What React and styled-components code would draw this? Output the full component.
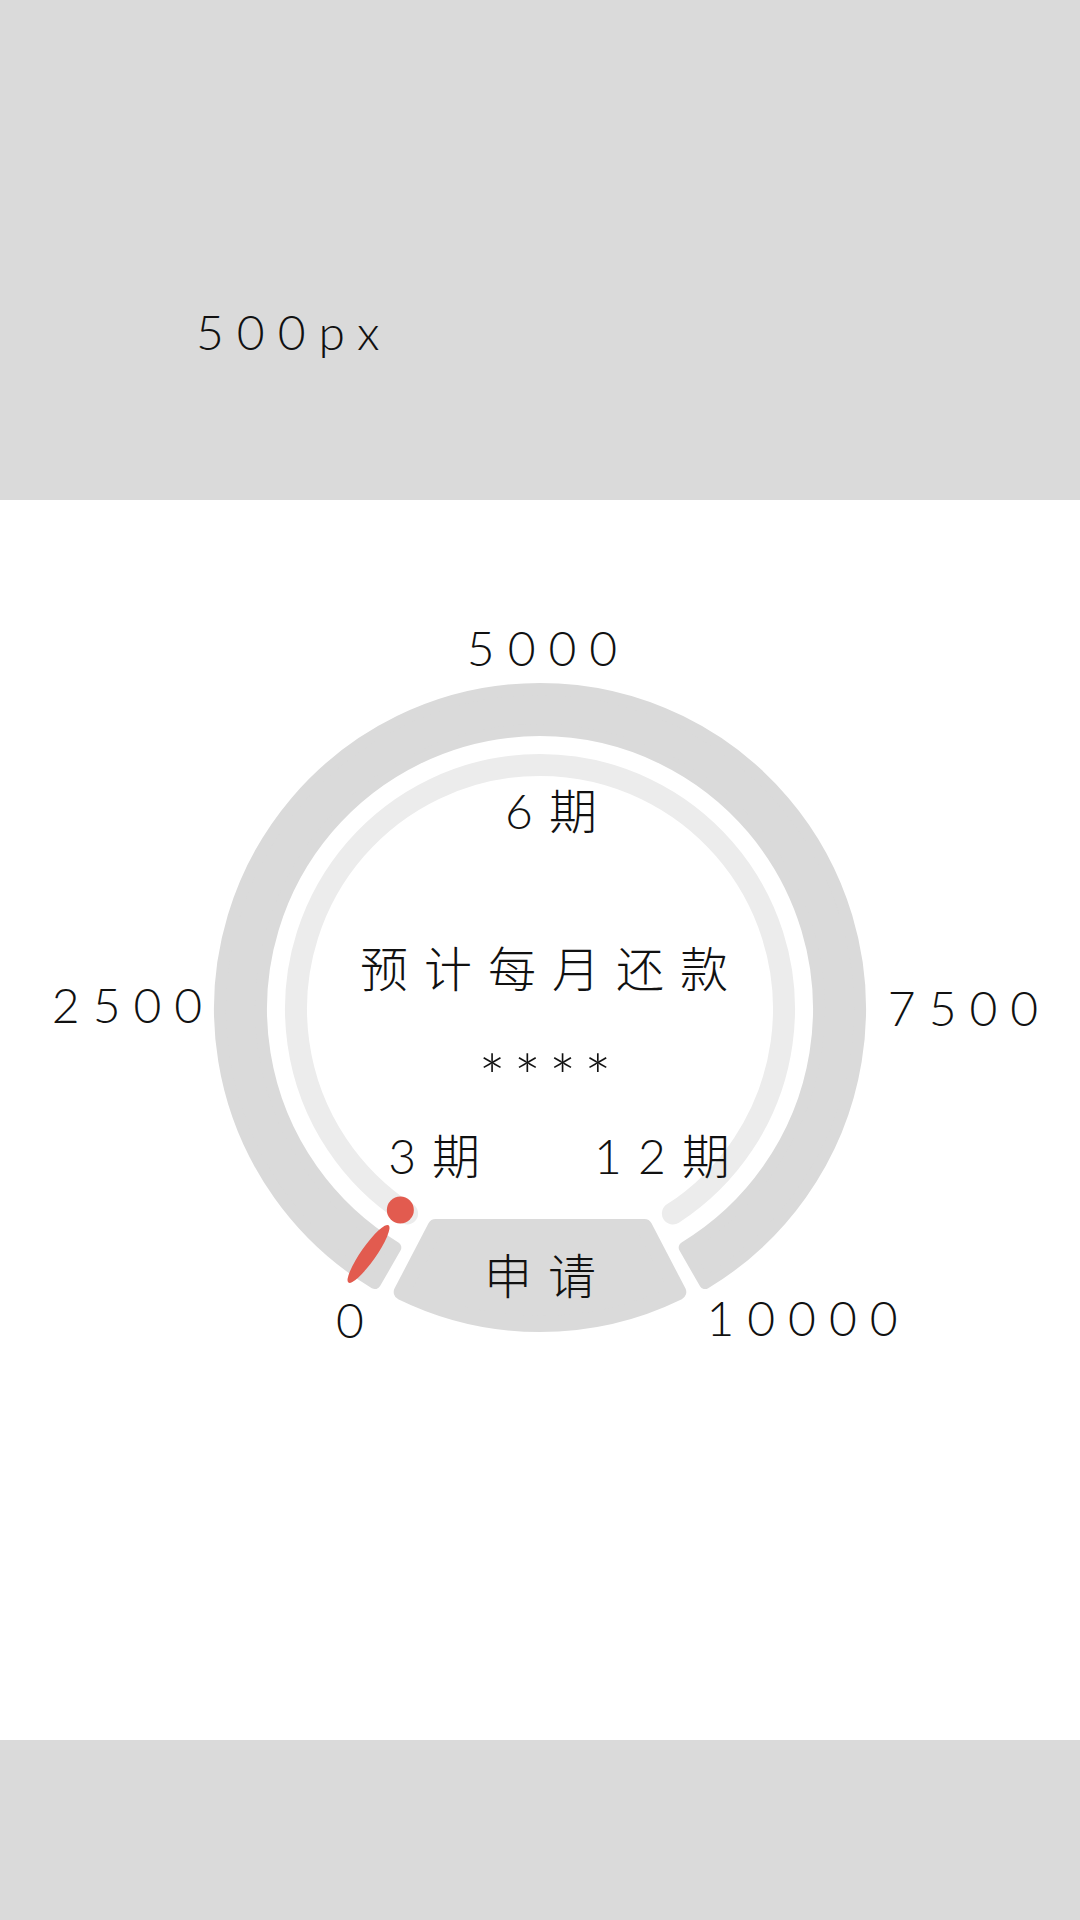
import React from "react";
import styled, { createGlobalStyle } from "styled-components";

const CX = 540;
const CY = 509;

const rad = (d) => (d * Math.PI) / 180;
const pt = (r, a) => [CX - r * Math.sin(rad(a)), CY + r * Math.cos(rad(a))];
const f = ([x, y]) => `${x.toFixed(1)} ${y.toFixed(1)}`;

// outer ring: 30deg .. 330deg measured from the bottom, corners rounded by the stroke
const outerRing = `M ${f(pt(320, 31.07))} A 320 320 0 1 1 ${f(pt(320, 328.93))} L ${f(
  pt(279, 328.77)
)} A 279 279 0 1 0 ${f(pt(279, 31.23))} Z`;

const innerTrack = `M ${f(pt(244, 33))} A 244 244 0 1 1 ${f(pt(244, 327))}`;

const [dotX, dotY] = pt(244.7, 34.8);
const [tipX, tipY] = pt(299, 35);

const ticks = [
  { label: "5000", x: 542, y: 148 },
  { label: "2500", x: 127, y: 505 },
  { label: "7500", x: 963, y: 508 },
  { label: "0", x: 350, y: 820 },
  { label: "10000", x: 802, y: 818 },
];

const GlobalStyle = createGlobalStyle`
  html, body {
    margin: 0;
    padding: 0;
    background: #fff;
  }
  body {
    font-family: Lato, "Noto Sans CJK SC", sans-serif;
    font-weight: 300;
    color: #111;
  }
`;

export default function App() {
  return (
    <>
      <GlobalStyle />
      <Page>
        <TopBand>
          <BandLabel>500px</BandLabel>
        </TopBand>

        <Stage>
          <Dial>
            <DialArt viewBox="0 0 1080 1240" width="1080" height="1240">
              <path
                d={outerRing}
                fill="#dadada"
                stroke="#dadada"
                strokeWidth="12"
                strokeLinejoin="round"
              />
              <path
                d={innerTrack}
                fill="none"
                stroke="#ececec"
                strokeWidth="22"
                strokeLinecap="round"
              />
              <circle cx={dotX} cy={dotY} r="13.5" fill="#e25b4f" />
              <ellipse
                cx={tipX}
                cy={tipY}
                rx="35"
                ry="7.5"
                fill="#e25b4f"
                transform={`rotate(125 ${tipX} ${tipY})`}
              />
            </DialArt>

            <Readout>
              <Period $shift={14}>6期</Period>
              <Headline>预计每月还款</Headline>
              <Amount>****</Amount>
              <PeriodRow>
                <Period>3期</Period>
                <Period>12期</Period>
              </PeriodRow>
            </Readout>

            {ticks.map((t) => (
              <Tick key={t.label} $x={t.x} $y={t.y}>
                {t.label}
              </Tick>
            ))}

            <ApplyButton type="button">
              <ButtonShape viewBox="0 0 296 114" width="296" height="114">
                <path
                  d="M 43.6 8 L 9.7 73 A 315 315 0 0 0 286.3 73 L 252.4 8 Z"
                  fill="#dadada"
                  stroke="#dadada"
                  strokeWidth="16"
                  strokeLinejoin="round"
                />
              </ButtonShape>
              <ButtonText>申请</ButtonText>
            </ApplyButton>
          </Dial>
        </Stage>

        <BottomBand />
      </Page>
    </>
  );
}

const Page = styled.div`
  width: 1080px;
  display: flex;
  flex-direction: column;
`;

const TopBand = styled.div`
  height: 500px;
  box-sizing: border-box;
  padding: 308px 0 0 196px;
  background: #dadada;
`;

const BandLabel = styled.span`
  display: block;
  font-size: 48px;
  line-height: 48px;
  letter-spacing: 13px;
`;

const Stage = styled.div`
  height: 1240px;
  background: #fff;
`;

const Dial = styled.div`
  position: relative;
  display: grid;
  width: 1080px;
  height: 1240px;
`;

const DialArt = styled.svg`
  grid-area: 1 / 1;
  display: block;
`;

const Readout = styled.div`
  grid-area: 1 / 1;
  display: flex;
  flex-direction: column;
  align-items: center;
  padding: 287px 0 0 24px;
  font-size: 48px;
  line-height: 48px;
  letter-spacing: 16px;
`;

const Period = styled.div`
  padding-left: ${(p) => p.$shift || 0}px;
  white-space: nowrap;
`;

const Headline = styled.div`
  margin-top: 110px;
  white-space: nowrap;
`;

const Amount = styled.div`
  margin-top: 59px;
  padding-right: 6px;
  font-size: 64px;
  letter-spacing: 8px;
`;

const PeriodRow = styled.div`
  display: flex;
  gap: 98px;
  margin-top: 32px;
  padding-left: 30px;
`;

const Tick = styled.span`
  position: absolute;
  left: ${(p) => p.$x}px;
  top: ${(p) => p.$y}px;
  transform: translate(-50%, -50%);
  padding-left: 13px;
  font-size: 48px;
  line-height: 48px;
  letter-spacing: 13px;
  white-space: nowrap;
`;

const ApplyButton = styled.button`
  position: absolute;
  left: 392px;
  top: 719px;
  width: 296px;
  height: 114px;
  padding: 0;
  border: 0;
  background: none;
  display: grid;
  place-items: center;
  font: inherit;
  color: inherit;
  cursor: pointer;
`;

const ButtonShape = styled.svg`
  grid-area: 1 / 1;
  display: block;
`;

const ButtonText = styled.span`
  grid-area: 1 / 1;
  padding-left: 16px;
  font-size: 48px;
  line-height: 48px;
  letter-spacing: 16px;
`;

const BottomBand = styled.div`
  height: 180px;
  background: #dadada;
`;
